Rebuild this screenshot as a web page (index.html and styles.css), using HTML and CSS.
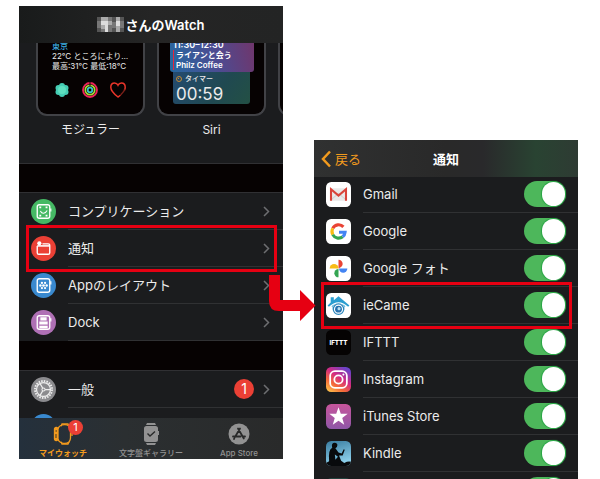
FILE: index.html
```html
<!DOCTYPE html>
<html lang="ja">
<head>
<meta charset="utf-8">
<meta name="viewport" content="width=device-width, initial-scale=1">
<title>Watch 通知設定</title>
<link rel="stylesheet" href="styles.css">
</head>
<body>
<main class="page">
  <section class="phone phone-watch">
    <header class="bar">
      <svg class="mosaic" width="27" height="15" viewBox="0 0 27 15" aria-hidden="true">
        <path fill="#777" d="M0 0h27v15H0z"/>
        <path fill="#555" d="M0 0h4v4H0zM0 11h4v4H0zM15 0h4v5h-4zM23 0h4v4h-4zM15 11h5v4h-5zM23 11h4v4h-4z"/>
        <path fill="#aaa" d="M4 0h7v4H4zM4 8h4v4H4zM11 4h4v4h-4zM19 0h4v15h-4z"/>
        <path fill="#ddd" d="M4 4h7v4H4zM8 8h3v7H8zM19 4h4v5h-4z"/>
      </svg>
      <h1 class="title">さんのWatch</h1>
    </header>

    <div class="gallery">
      <figure class="face">
        <div class="screen">
          <div class="weather">
            <div class="city">東京</div>
            <div>22℃ ところにより…</div>
            <div>最高:31℃ 最低:18℃</div>
          </div>
          <div class="face-icons">
            <svg width="16" height="16" viewBox="0 0 16 16" aria-hidden="true"><g fill="#45cdb4"><circle cx="8" cy="4" r="3"/><circle cx="8" cy="12" r="3"/><circle cx="4.500" cy="6" r="3"/><circle cx="11.500" cy="6" r="3"/><circle cx="4.500" cy="10" r="3"/><circle cx="11.500" cy="10" r="3"/></g><circle cx="8" cy="8" r="4" fill="#5ee0c0"/></svg>
            <svg width="16" height="16" viewBox="0 0 16 16" fill="none" stroke-width="1.800" aria-hidden="true"><circle cx="8" cy="8" r="7" stroke="#ee2359"/><circle cx="8" cy="8" r="4.700" stroke="#a5dc36"/><circle cx="8" cy="8" r="2.300" stroke="#35c6d0"/><path d="M8 0v4" stroke="#090504" stroke-width="1"/></svg>
            <svg width="16" height="16" viewBox="0 0 16 16" fill="none" stroke="#e8352a" stroke-width="1.500" stroke-linecap="round" aria-hidden="true"><path d="M10 13.500 8 15C4 12 .8 9 .8 5.300.8 2.500 2.600 1 4.600 1 6.300 1 7.400 2 8 3.200 8.600 2 9.700 1 11.400 1c2 0 3.800 1.500 3.800 4.300 0 1-.2 2-.7 2.700"/><path stroke="#792019" d="M14.500 8c-.8 1.700-2 3-3.500 4.500"/></svg>
          </div>
        </div>
        <figcaption>モジュラー</figcaption>
      </figure>
      <figure class="face">
        <div class="screen">
          <div class="event">
            <div>11:30–12:30</div>
            <div class="event-detail">ライアンと会う<br>Philz Coffee</div>
          </div>
          <div class="timer">
            <div class="timer-name"><svg width="6" height="6" viewBox="0 0 6 6" fill="none" stroke="#c58a33" aria-hidden="true"><circle cx="3" cy="3" r="2.500"/><path d="M3 3 2 2"/></svg>タイマー</div>
            <div class="timer-time">00:59</div>
          </div>
        </div>
        <figcaption>Siri</figcaption>
      </figure>
      <figure class="face"><div class="screen"></div></figure>
    </div>

    <nav class="list">
      <a class="row" href="#">
        <svg class="icon" viewBox="0 0 24 24" fill="none" stroke="#fff" aria-hidden="true"><circle cx="12" cy="12" r="12" fill="#45b964" stroke="none"/><rect x="6" y="5.500" width="12" height="13" rx="2" stroke-width="1.300"/><path d="M19 9v3" stroke-width="1.200"/><path d="M9 11.500c1.500 3 4.500 3 6.500-.5" /><path d="M8 8h1.800M14 8h1.800M8 16h1.800M14 16h1.800" stroke-width="1.800"/></svg>
        <span class="row-body"><span>コンプリケーション</span><svg class="chevron" viewBox="0 0 7 11"><path d="m1 1 4.500 4.500L1 10"/></svg></span>
      </a>
      <a class="row marked" href="#">
        <svg class="icon" viewBox="0 0 24 24" aria-hidden="true"><circle cx="12" cy="12" r="12" fill="#eb4035"/><path d="M6 9.500V16q0 1.500 1.500 1.500h9q1.500 0 1.500-1.500V9q0-1.500-1.500-1.500H11" fill="none" stroke="#fff" stroke-width="1.300"/><path d="M6 9.500h12" stroke="#fff" stroke-width="1.500"/><circle cx="8" cy="7" r="2" fill="#fff"/></svg>
        <span class="row-body"><span>通知</span><svg class="chevron" viewBox="0 0 7 11"><path d="m1 1 4.500 4.500L1 10"/></svg></span>
        <svg class="arrow" width="47" height="46" viewBox="0 0 47 46" aria-hidden="true"><path fill="#e60012" d="M0 0h11v25h20V15l15.500 15.500L31 46V36H10Q0 36 0 26z"/></svg>
      </a>
      <a class="row" href="#">
        <svg class="icon" viewBox="0 0 24 24" fill="none" stroke="#fff" aria-hidden="true"><circle cx="12" cy="12" r="12" fill="#3989cf" stroke="none"/><rect x="6" y="5.500" width="12" height="13" rx="2" stroke-width="1.300"/><path d="M19 8v3" stroke-width="1.200"/><g fill="#fff" stroke="none"><circle cx="12" cy="12" r="1.300"/><circle cx="9" cy="12" r="1.200"/><circle cx="15" cy="12" r="1.200"/><circle cx="10.500" cy="9.500" r="1.100"/><circle cx="13.500" cy="9.500" r="1.100"/><circle cx="10.500" cy="14.500" r="1.100"/><circle cx="13.500" cy="14.500" r="1.100"/></g></svg>
        <span class="row-body"><span>Appのレイアウト</span><svg class="chevron" viewBox="0 0 7 11"><path d="m1 1 4.500 4.500L1 10"/></svg></span>
      </a>
      <a class="row" href="#">
        <svg class="icon" viewBox="0 0 24 24" fill="none" stroke="#fff" aria-hidden="true"><circle cx="12" cy="12" r="12" fill="#af70b5" stroke="none"/><rect x="6" y="5.500" width="12" height="13" rx="2" stroke-width="1.300"/><path d="M19 8v3" stroke-width="1.200"/><path fill="#fff" stroke="none" d="M9 7h6v3H9zM8 11h8v3H8zM8 15h8v2.500H8z"/></svg>
        <span class="row-body"><span>Dock</span><svg class="chevron" viewBox="0 0 7 11"><path d="m1 1 4.500 4.500L1 10"/></svg></span>
      </a>
    </nav>

    <nav class="list list-general">
      <a class="row" href="#">
        <svg class="icon" viewBox="0 0 24 24" fill="none" stroke="#ededed" aria-hidden="true"><circle cx="12" cy="12" r="12" fill="#8b8b8e" stroke="none"/><circle cx="12" cy="12" r="8.200" stroke-width="1.800" stroke-dasharray="1.500 1.076"/><circle cx="12" cy="12" r="6.700" stroke-width="1.200"/><path d="M12 12h6.500M12 12 8.700 6.400M12 12l-3.300 5.600" stroke-width="1.200"/><circle cx="12" cy="12" r="1.500" fill="#8b8b8e"/></svg>
        <span class="row-body"><span>一般</span><span class="badge">1</span><svg class="chevron" viewBox="0 0 7 11"><path d="m1 1 4.500 4.500L1 10"/></svg></span>
      </a>
      <div class="row peek"><svg class="icon" viewBox="0 0 24 24" aria-hidden="true"><circle cx="12" cy="12" r="12" fill="#3989cf"/><path d="M11 4h2v4h-2z" fill="#a8d4f5"/></svg></div>
    </nav>

    <nav class="tabs">
      <a class="tab tab-current" href="#">
        <span class="tab-icon">
          <svg width="20" height="22" viewBox="0 0 20 22" fill="none" stroke="#f39b1e" stroke-width="1.300" aria-hidden="true"><path d="M5 6Q5.500 3 9 2q4-1.300 7 1 1.500 2 1.500 4v8q0 2-1.500 4-3 2.300-7 1-3.500-1-4-4"/><path d="M8 3.200 9 1h6l1 2M8 18.800 9 21h6l1-2"/><rect x="1.500" y="4.500" width="3.500" height="13" rx="1.500" fill="#f39b1e"/><path d="M2.500 8h1.500M3 11v4" stroke="#433622" stroke-width="1"/><path d="M19 9v4"/></svg>
          <span class="badge badge-tab">1</span>
        </span>
        マイウォッチ
      </a>
      <a class="tab" href="#">
        <span class="tab-icon"><svg width="17" height="22" viewBox="0 0 17 22" aria-hidden="true"><path fill="#929292" d="M4 0h8l1 2H3zM4 22h8l1-2H3zM3.500 3h9Q15 3 15 5.500V8h1v4h-1v4.500q0 2.500-2.500 2.500h-9Q1 19 1 16.500v-11Q1 3 3.500 3z"/><path d="m4.500 10.500 2.500 2.500 5-4.500" fill="none" stroke="#292a2a" stroke-width="1.400"/></svg></span>
        文字盤ギャラリー
      </a>
      <a class="tab" href="#">
        <span class="tab-icon"><svg width="22" height="22" viewBox="0 0 22 22" fill="none" stroke="#292a2a" stroke-width="1.800" stroke-linecap="round" aria-hidden="true"><circle cx="11" cy="11" r="10.500" fill="#929292" stroke="none"/><path d="m12 5.500-5 8.500M10 5.500l5.800 10M5 13.500h7.500M15 13.500h2M6.300 15.500l-.3.500"/></svg></span>
        App Store
      </a>
    </nav>
  </section>

  <section class="phone phone-notice">
    <header class="bar bar-notice">
      <a class="back" href="#"><svg width="10" height="18" viewBox="0 0 10 18" fill="none" stroke="#f39b1e" stroke-width="2.500" aria-hidden="true"><path d="M9 1.500 2 9l7 7.500"/></svg>戻る</a>
      <h2 class="title">通知</h2>
    </header>
    <div class="list apps">
      <label class="row">
        <svg class="icon" viewBox="0 0 24 24" aria-hidden="true"><rect width="24" height="24" rx="5" fill="#fff"/><path d="M4 6h16v12H4z" fill="#e9e9e9"/><path d="m5 17 7-6 7 6" fill="none" stroke="#d2d2d2"/><path d="M4.800 18V7l7.200 6 7.200-6v11" fill="none" stroke="#d9443b" stroke-width="2"/></svg>
        <span class="row-body"><span>Gmail</span><input class="switch" type="checkbox" role="switch" checked></span>
      </label>
      <label class="row">
        <svg class="icon" viewBox="0 0 24 24" fill="none" stroke-width="3" aria-hidden="true"><rect width="24" height="24" rx="5" fill="#fff"/><path stroke="#e94435" d="M16.700 7.500A6.300 6.300 0 0 0 6.500 9"/><path stroke="#f8bc15" d="M6.500 9a6.300 6.300 0 0 0 0 6"/><path stroke="#34a552" d="M6.500 15a6.300 6.300 0 0 0 9.500 2"/><path stroke="#4384f3" d="M16 17q2-1.500 2.300-4.300H12.500"/></svg>
        <span class="row-body"><span>Google</span><input class="switch" type="checkbox" role="switch" checked></span>
      </label>
      <label class="row">
        <svg class="icon" viewBox="0 0 24 24" aria-hidden="true"><rect width="24" height="24" rx="5" fill="#fff"/><path fill="#e94435" d="M12 3.500a4 4 0 0 1 4 4.200q0 2.500-4 4.300z"/><path fill="#4384f3" d="M20.500 12a4 4 0 0 1-8 0z"/><path fill="#34a552" d="M12 20.500a4 4 0 0 1 0-8z"/><path fill="#f8bc15" d="M3.500 12a4 4 0 0 1 8.500 0z"/></svg>
        <span class="row-body"><span>Google フォト</span><input class="switch" type="checkbox" role="switch" checked></span>
      </label>
      <label class="row marked">
        <svg class="icon" viewBox="0 0 24 24" aria-hidden="true"><rect width="24" height="24" rx="5" fill="#fff"/><path fill="#2b9ed0" d="M4.500 4h3v3L12 3l10.500 9-1.500 1.500-3-1V16H6v-3.500l-3 1L1.500 12l3-3z"/><path d="M3 14q9-9 18 0" fill="none" stroke="#fff" stroke-width="1.300"/><circle cx="12" cy="15.500" r="6" fill="#fff"/><circle cx="12" cy="15.500" r="5" fill="none" stroke="#2d87bd" stroke-width="1.200"/><circle cx="12" cy="15.500" r="3.300" fill="#2671ae"/><circle cx="12.500" cy="15" r="1.500" fill="#b9def0"/></svg>
        <span class="row-body"><span>ieCame</span><input class="switch" type="checkbox" role="switch" checked></span>
      </label>
      <label class="row">
        <svg class="icon" viewBox="0 0 24 24" aria-hidden="true"><rect width="24" height="24" rx="5" fill="#050303"/><text class="ifttt" x="12" y="14" text-anchor="middle">IFTTT</text></svg>
        <span class="row-body"><span>IFTTT</span><input class="switch" type="checkbox" role="switch" checked></span>
      </label>
      <label class="row">
        <svg class="icon" viewBox="0 0 24 24" fill="none" stroke="#fff" stroke-width="1.700" aria-hidden="true"><defs><linearGradient id="insta" x1="0" y1="1" x2=".7" y2="0"><stop offset="0" stop-color="#ffd34f"/><stop offset=".35" stop-color="#f46a37"/><stop offset=".65" stop-color="#d42b82"/><stop offset="1" stop-color="#6c42c7"/></linearGradient></defs><rect width="24" height="24" rx="5" fill="url(#insta)" stroke="none"/><rect x="4" y="4" width="16" height="16" rx="4.500"/><circle cx="12" cy="12" r="4"/><circle cx="16.700" cy="7.300" r="1" fill="#fff" stroke="none"/></svg>
        <span class="row-body"><span>Instagram</span><input class="switch" type="checkbox" role="switch" checked></span>
      </label>
      <label class="row">
        <svg class="icon" viewBox="0 0 24 24" aria-hidden="true"><defs><linearGradient id="itunes" x2="0" y2="1"><stop stop-color="#c7559b"/><stop offset="1" stop-color="#8f57a8"/></linearGradient></defs><rect width="24" height="24" rx="5" fill="url(#itunes)"/><path fill="#fff" d="m12 3 2.200 6.300 6.600.1-5.200 4.100 1.900 6.400-5.500-3.800-5.500 3.800 1.900-6.400-5.200-4.100 6.600-.1z"/></svg>
        <span class="row-body"><span>iTunes Store</span><input class="switch" type="checkbox" role="switch" checked></span>
      </label>
      <label class="row">
        <svg class="icon" viewBox="0 0 24 24" aria-hidden="true"><defs><linearGradient id="kindle" x2=".3" y2="1"><stop stop-color="#387b9f"/><stop offset="1" stop-color="#8ed1ec"/></linearGradient><clipPath id="tile"><rect width="24" height="24" rx="5"/></clipPath></defs><g clip-path="url(#tile)"><path fill="url(#kindle)" d="M0 0h24v24H0z"/><path fill="#080a0c" d="M7 2q3-1 4 1.500Q11 6 9 7l3 4 3 1 2-4 1 .5-2 5.500-3.500 0 2 5 3 2q4-2 6.500-1v4H0v-3l3-1.500Q2 8 6 6.500 5 3 7 2z"/><path d="M8.500 13 9 18l2.500-3z" fill="#6ab2d1"/></g></svg>
        <span class="row-body"><span>Kindle</span><input class="switch" type="checkbox" role="switch" checked></span>
      </label>
      <div class="row">
        <svg class="icon" viewBox="0 0 24 24" aria-hidden="true"><rect width="24" height="24" rx="5" fill="#24433e"/></svg>
        <span class="row-body"><span></span><input class="switch" type="checkbox" role="switch" aria-label="次のアプリ" checked></span>
      </div>
    </div>
  </section>
</main>
</body>
</html>
```

FILE: styles.css
```css
* { box-sizing: border-box; }

body {
  margin: 0;
  background: #fff;
  color: #ebebeb;
  font: 13px/18px Inter, "Noto Sans CJK JP", sans-serif;
}

a { color: inherit; text-decoration: none; }

.page {
  display: grid;
  grid-template-columns: repeat(2, minmax(0, 1fr));
  align-items: start;
  gap: 31px;
  height: 100vh;
  padding: 6px 22px 0 19px;
  overflow: hidden;
}

.phone { background: #1b1c1e; }
.phone-watch { position: relative; z-index: 1; background: #060202; }
.phone-notice { margin-top: 134px; }

.bar {
  display: flex;
  align-items: center;
  justify-content: center;
  gap: 1px;
  height: 37px;
  background: linear-gradient(90deg, #191b1b, #252525 50%, #232424);
}

.bar-notice {
  display: grid;
  grid-template-columns: 1fr auto 1fr;
  position: relative;
  z-index: 1;
  background: linear-gradient(90deg, #303131, #292929 50%, #29292b 64%, #294332 84%, #2e3b33);
}

.title {
  margin: 0;
  color: #fff;
  font-size: 13px;
  font-weight: 600;
  line-height: 18px;
}

.back {
  display: flex;
  align-items: center;
  gap: 4px;
  padding-left: 7px;
  color: #f39b1e;
}

/* Watch face gallery */
.gallery {
  display: flex;
  gap: 12px;
  height: 121px;
  padding-left: 17px;
  overflow: hidden;
  background: #1b1c1e;
  border-bottom: 1px solid #303033;
}

.face { flex: none; width: 109px; margin: 0; }

.face figcaption {
  margin-top: 5px;
  text-align: center;
  font-size: 12px;
}

.screen {
  height: 73px;
  overflow: hidden;
  background: #060202;
  border: 2px solid #414246;
  border-top: 0;
  border-radius: 0 0 11px 11px;
}

.weather {
  margin: -2px 0 0 14px;
  font-size: 8px;
  line-height: 10px;
  white-space: nowrap;
}

.city { color: #3eaee0; font-weight: 500; }

.face-icons { display: flex; gap: 12px; padding: 11px 0 0 16px; }

.event {
  height: 29px;
  margin: 0 10px 0 11px;
  padding-left: 3px;
  overflow: hidden;
  border-radius: 0 0 3px 3px;
  background: linear-gradient(75deg, #2569a0, #4d4b91 55%, #70366c);
  color: #fff;
  font-size: 9px;
  font-weight: 600;
  line-height: 10px;
  white-space: nowrap;
}

.event > :first-child { margin-top: -3px; }

.event-detail {
  padding-left: 2px;
  border-left: 1px solid #e5263c;
  font-size: 8px;
}

.timer {
  height: 32px;
  margin: 0 14px;
  padding: 2px 3px;
  border-radius: 0 0 3px 3px;
  background: linear-gradient(125deg, #244b70, #204951 60%, #235044);
}

.timer-name {
  display: flex;
  align-items: center;
  gap: 3px;
  font-size: 7px;
  font-weight: 500;
  line-height: 10px;
}

.timer-time { font-size: 17px; line-height: 20px; }

/* Lists */
.list {
  margin-top: 28px;
  background: #1b1c1e;
  border-top: 1px solid #303033;
}

.list-general { margin-top: 29px; }

.row {
  display: flex;
  align-items: center;
  gap: 12px;
  height: 37px;
  padding-left: 12px;
}

.icon { flex: none; width: 25px; height: 25px; }

.row-body {
  display: flex;
  flex: 1;
  align-items: center;
  align-self: stretch;
  padding-right: 12px;
  border-bottom: 1px solid #303133;
}

.row-body > :first-child { flex: 1; }

.chevron {
  width: 7px;
  height: 11px;
  margin-right: 1px;
  fill: none;
  stroke: #6d6e71;
  stroke-width: 1.5;
}

.badge {
  width: 20px;
  height: 20px;
  margin-right: 9px;
  border-radius: 50%;
  background: #eb4035;
  color: #fff;
  font-size: 14px;
  line-height: 20px;
  text-align: center;
}

.peek { align-items: flex-start; height: 10px; overflow: hidden; padding-top: 6px; }

.marked { position: relative; }

.marked::after {
  content: "";
  position: absolute;
  inset: -5px 6px -5px 7px;
  border: 3px solid #e60012;
}

.arrow { position: absolute; top: 45px; right: -33px; }

/* Tab bar */
.tabs {
  display: grid;
  grid-template-columns: repeat(3, 1fr);
  height: 41px;
  padding-top: 5px;
  background: linear-gradient(90deg, #24303c, #2b2f31 40%, #292a2a);
}

.tab {
  display: flex;
  flex-direction: column;
  align-items: center;
  color: #929292;
  font-size: 8px;
  font-weight: 500;
  line-height: 12px;
  white-space: nowrap;
}

.tab-current { color: #f39b1e; font-weight: 700; }
.tab-icon { position: relative; height: 24px; }

.badge-tab {
  position: absolute;
  top: -3px;
  left: 15px;
  width: 15px;
  height: 15px;
  margin: 0;
  font-size: 11px;
  font-weight: 400;
  line-height: 15px;
}

/* App notification switches */
.apps { margin-top: -1px; border-top: 0; }

.switch {
  appearance: none;
  width: 42px;
  height: 26px;
  margin: 0;
  padding: 1px;
  border-radius: 13px;
  background: #4db75b;
}

.switch::before {
  content: "";
  display: block;
  width: 23px;
  height: 24px;
  margin-left: auto;
  border-radius: 12px;
  background: #fff;
  box-shadow: 0 0 1px 1px #27a544;
}

.ifttt { fill: #fff; font: 800 6px Inter, sans-serif; }
```
